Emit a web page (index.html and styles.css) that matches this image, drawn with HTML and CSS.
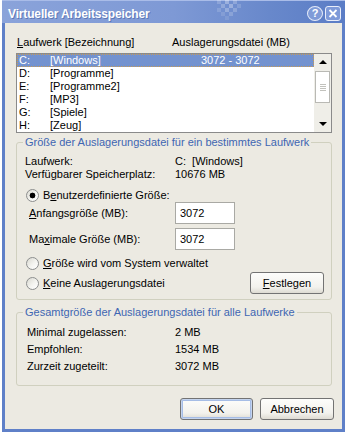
FILE: index.html
```html
<!DOCTYPE html>
<html>
<head>
<meta charset="utf-8">
<link rel="stylesheet" href="styles.css">
</head>
<body>
<div class="win">
  <div class="titlebar">
    <span class="title">Virtueller Arbeitsspeicher</span>
    <svg class="deco" width="28" height="22" viewBox="0 0 28 22">
      <rect x="2" y="0" width="4" height="4" fill="#fff" opacity=".18"/>
      <rect x="10" y="0" width="4" height="4" fill="#fff" opacity=".3"/>
      <rect x="18" y="0" width="4" height="4" fill="#fff" opacity=".22"/>
      <rect x="6" y="4" width="4" height="4" fill="#fff" opacity=".22"/>
      <rect x="14" y="4" width="4" height="4" fill="#fff" opacity=".3"/>
      <rect x="22" y="4" width="4" height="4" fill="#fff" opacity=".15"/>
      <rect x="2" y="8" width="4" height="4" fill="#fff" opacity=".15"/>
      <rect x="10" y="8" width="4" height="4" fill="#fff" opacity=".25"/>
      <rect x="18" y="8" width="4" height="4" fill="#fff" opacity=".2"/>
      <rect x="6" y="12" width="4" height="4" fill="#fff" opacity=".12"/>
      <rect x="14" y="12" width="4" height="4" fill="#fff" opacity=".18"/>
      <rect x="10" y="16" width="4" height="4" fill="#fff" opacity=".1"/>
    </svg>
    <div class="tbtns">
      <div class="tb-help">?</div>
      <svg class="tb-close" width="16" height="15" viewBox="0 0 16 15">
        <rect x="0.5" y="0.5" width="15" height="14" rx="2.5" fill="#7e9ad9" stroke="#e9eefa"/>
        <path d="M4.5 4 L11.5 11 M11.5 4 L4.5 11" stroke="#fff" stroke-width="1.8"/>
      </svg>
    </div>
  </div>
  <div class="body">
    <div class="hdr">
      <span class="h1"><u>L</u>aufwerk [Bezeichnung]</span>
      <span>Auslagerungsdatei (MB)</span>
    </div>
    <div class="list">
      <div class="rows">
        <div class="row sel"><span class="d">C:</span><span class="n">[Windows]</span><span>3072 - 3072</span></div>
        <div class="row"><span class="d">D:</span><span class="n">[Programme]</span></div>
        <div class="row"><span class="d">E:</span><span class="n">[Programme2]</span></div>
        <div class="row"><span class="d">F:</span><span class="n">[MP3]</span></div>
        <div class="row"><span class="d">G:</span><span class="n">[Spiele]</span></div>
        <div class="row"><span class="d">H:</span><span class="n">[Zeug]</span></div>
      </div>
      <div class="sb">
        <div class="arr"><span class="up"></span></div>
        <div class="thumb"><span class="grip"></span></div>
        <div class="track"></div>
        <div class="arr"><span class="down"></span></div>
      </div>
    </div>

    <fieldset class="grp g1">
      <legend>Größe der Auslagerungsdatei für ein bestimmtes Laufwerk</legend>
      <div class="kv"><span class="k">Laufwerk:</span><span>C:&nbsp; [Windows]</span></div>
      <div class="kv"><span class="k">Verfügbarer Speicherplatz:</span><span>10676 MB</span></div>
      <div class="radio r1"><span class="rb on"></span><span>B<u>e</u>nutzerdefinierte Größe:</span></div>
      <div class="fr"><span class="fl"><u>A</u>nfangsgröße (MB):</span><span class="inp">3072</span></div>
      <div class="fr fr2"><span class="fl">Ma<u>x</u>imale Größe (MB):</span><span class="inp">3072</span></div>
      <div class="radio r2"><span class="rb"></span><span><u>G</u>röße wird vom System verwaltet</span></div>
      <div class="radio r3"><span class="rb"></span><span><u>K</u>eine Auslagerungsdatei</span><span class="btn set"><u>F</u>estlegen</span></div>
    </fieldset>

    <fieldset class="grp g2">
      <legend>Gesamtgröße der Auslagerungsdatei für alle Laufwerke</legend>
      <div class="kv2"><span class="k2">Minimal zugelassen:</span><span>2 MB</span></div>
      <div class="kv2"><span class="k2">Empfohlen:</span><span>1534 MB</span></div>
      <div class="kv2"><span class="k2">Zurzeit zugeteilt:</span><span>3072 MB</span></div>
    </fieldset>

    <div class="btns">
      <span class="btn ok">OK</span>
      <span class="btn cancel">Abbrechen</span>
    </div>
  </div>
</div>
</body>
</html>
```
FILE: styles.css
```css
* { box-sizing: border-box; }
html, body { margin: 0; padding: 0; }
body {
  background: #fff;
  width: 348px;
  height: 434px;
  overflow: hidden;
  font-family: "Liberation Sans", Arial, sans-serif;
  font-size: 11px;
  color: #000;
}
u { text-decoration: underline; text-underline-offset: 1px; }

.win {
  margin-left: 2px;
  width: 343px;
  height: 432px;
  display: flex;
  flex-direction: column;
}

.titlebar {
  height: 23px;
  flex: none;
  display: flex;
  align-items: center;
  padding: 4px 4px 0 6px;
  position: relative;
  background: linear-gradient(to right, #8aa3da 0%, #7e99d5 50%, #6888cb 78%, #5b7dc6 100%);
  box-shadow: inset 0 1px 0 #a9bce8;
}
.title {
  color: #fff;
  font-weight: bold;
  font-size: 12px;
  letter-spacing: -0.15px;
  text-shadow: 1px 1px 0 #5f78b6;
}
.deco {
  position: absolute;
  left: 213px;
  top: 0;
}
.tbtns {
  margin-left: auto;
  display: flex;
  gap: 2px;
  align-items: center;
}
.tb-help {
  width: 16px;
  height: 15px;
  border: 1px solid #e4eaf8;
  border-radius: 50%;
  background: #7f9bd8;
  color: #fff;
  font-weight: bold;
  font-size: 11px;
  line-height: 13px;
  text-align: center;
}
.tb-close { display: block; }

.body {
  flex: 1;
  background: #eceae2;
  border: 3px solid #5f80c8;
  border-top: 0;
  padding: 13px 10px 0 11px;
  display: flex;
  flex-direction: column;
}

.hdr {
  display: flex;
  height: 13px;
  line-height: 13px;
  padding-left: 1px;
}
.hdr .h1 { width: 155px; }

.list {
  margin-top: 4px;
  height: 80px;
  width: 316px;
  border: 1px solid #8a8a8a;
  background: #fff;
  display: flex;
  overflow: hidden;
}
.rows { flex: 1; }
.row {
  height: 13px;
  line-height: 13px;
  display: flex;
  padding-left: 2px;
  white-space: nowrap;
}
.row .d { width: 31px; }
.row .n { width: 151px; }
.row.sel {
  background: #7392cf;
  color: #fff;
  outline: 1px dotted #c79a55;
  outline-offset: -1px;
}

.sb {
  width: 17px;
  background: #efeee8;
  display: flex;
  flex-direction: column;
}
.arr {
  height: 16px;
  display: flex;
  align-items: center;
  justify-content: center;
}
.arr:last-child { height: 17px; }
.up {
  width: 0; height: 0;
  border-left: 4px solid transparent;
  border-right: 4px solid transparent;
  border-bottom: 4px solid #000;
}
.down {
  width: 0; height: 0;
  border-left: 4px solid transparent;
  border-right: 4px solid transparent;
  border-top: 4px solid #000;
}
.thumb {
  margin: 1px 0 0 1px;
  width: 15px;
  height: 32px;
  border: 1px solid #b9b9b4;
  background: #fff;
  display: flex;
  align-items: center;
  justify-content: center;
}
.grip {
  width: 6px;
  height: 7px;
  background: repeating-linear-gradient(#c2c2bd 0 1px, transparent 1px 2px);
}
.track { flex: 1; }

.grp {
  margin: 0;
  width: 316px;
  min-width: 0;
  border: 1px solid #d0d0bf;
  border-radius: 3px;
}
.grp legend {
  color: #4066b2;
  line-height: 13px;
  padding: 0 2px;
}
.g1 {
  margin-top: 3px;
  padding: 6px 7px 5px 8px;
}
.g1 legend { margin-left: -2px; }
.g2 {
  margin-top: 6px;
  padding: 5px 7px 10px 10px;
}
.g2 legend { margin-left: -4px; }

.kv {
  display: flex;
  height: 13px;
  line-height: 13px;
}
.kv .k { width: 150px; }

.kv2 {
  display: flex;
  height: 17px;
  line-height: 17px;
}
.kv2 .k2 { width: 148px; }

.radio {
  display: flex;
  align-items: center;
  height: 14px;
}
.radio.r1 { margin-top: 7px; }
.radio.r2 { margin-top: 6px; }
.radio.r3 { margin-top: 2px; height: 22px; }
.rb {
  width: 13px;
  height: 13px;
  border-radius: 50%;
  border: 1px solid #8c8e8e;
  background: linear-gradient(135deg, #d9d8d0 0%, #f4f4f0 55%, #fff 100%);
  margin: 0 4px 0 1px;
  flex: none;
}
.rb.on {
  background: radial-gradient(circle at 50% 50%, #000 0 2.6px, transparent 3.2px),
              linear-gradient(135deg, #d9d8d0 0%, #f4f4f0 55%, #fff 100%);
}

.fr {
  display: flex;
  align-items: center;
  height: 22px;
  padding-left: 4px;
}
.fr2 { margin-top: 4px; }
.fl { width: 146px; }
.inp {
  width: 60px;
  height: 22px;
  border: 1px solid #a9a9a4;
  background: #fff;
  padding-left: 4px;
  line-height: 20px;
}

.btn {
  display: flex;
  align-items: center;
  justify-content: center;
  height: 22px;
  border: 1px solid #737373;
  border-radius: 3px;
  background: linear-gradient(#fdfdfb 0%, #f3f2ed 70%, #dedbd2 100%);
}
.set {
  margin-left: auto;
  width: 74px;
}
.btns {
  margin-top: 12px;
  margin-right: -2px;
  display: flex;
  justify-content: flex-end;
  gap: 7px;
}
.ok {
  width: 73px;
  box-shadow: inset 0 0 0 1px #c4d4ee, inset 0 0 0 2px #a6bde6;
}
.cancel { width: 74px; }
```
